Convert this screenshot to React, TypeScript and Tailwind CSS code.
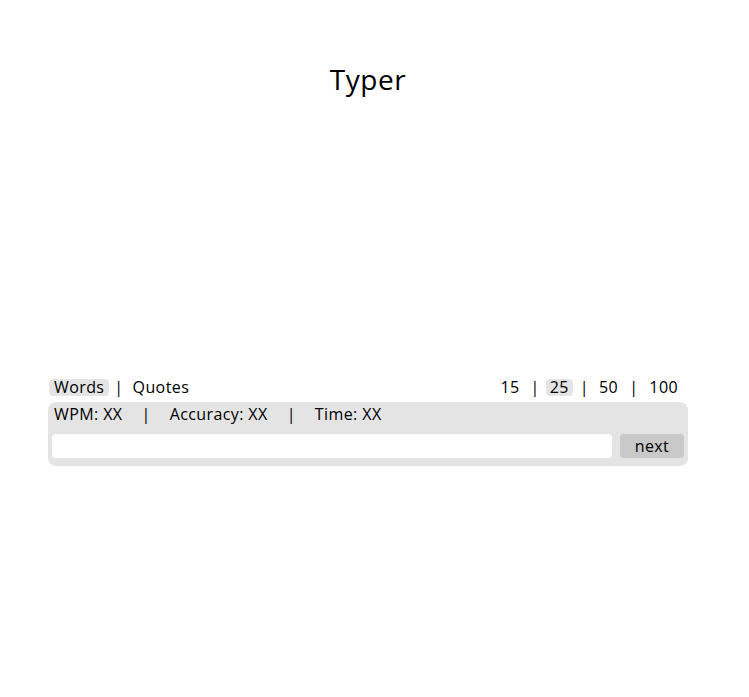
import React from "react";

export default function App() {
  const font = { fontFamily: '"Open Sans", "Liberation Sans", sans-serif' };
  return (
    <div className="min-h-[697px] w-full bg-white text-black" style={font}>
      <div className="ml-[48px] w-[640px]">
        <h1 className="pt-[60px] text-center text-[28px] leading-[38px] tracking-[0.6px]">Typer</h1>
        <div className="h-[280px]" />
        <div className="flex h-[18px] items-center justify-between text-[16px] tracking-[0.4px]">
          <div className="flex items-center">
            <span className="ml-[1px] rounded-[4px] bg-[#e4e4e4] px-[5px] leading-[17px]">Words</span>
            <span className="ml-[5px]">|</span>
            <span className="ml-[9px]">Quotes</span>
          </div>
          <div className="mr-[10px] flex items-center">
            <span>15</span>
            <span className="ml-[11px]">|</span>
            <span className="ml-[6px] rounded-[4px] bg-[#e4e4e4] px-[4px] leading-[17px]">25</span>
            <span className="ml-[7px]">|</span>
            <span className="ml-[10px]">50</span>
            <span className="ml-[11px]">|</span>
            <span className="ml-[11px]">100</span>
          </div>
        </div>
        <div className="mt-[6px] rounded-[8px] bg-[#e4e4e4] px-[4px] pb-[8px] pt-[2px]">
          <div className="flex h-[20px] items-center pl-[2px] text-[16px] tracking-[0.4px]">
            <span>WPM: XX</span>
            <span className="ml-[19px]">|</span>
            <span className="ml-[19px]">Accuracy: XX</span>
            <span className="ml-[19px]">|</span>
            <span className="ml-[19px]">Time: XX</span>
          </div>
          <div className="mt-[10px] flex items-center gap-[8px]">
            <input className="h-[24px] w-[560px] rounded-[4px] bg-white outline-none" />
            <button className="h-[24px] w-[64px] rounded-[4px] bg-[#c9c9c9] text-[16px] leading-[24px] tracking-[0.4px]">next</button>
          </div>
        </div>
      </div>
    </div>
  );
}
